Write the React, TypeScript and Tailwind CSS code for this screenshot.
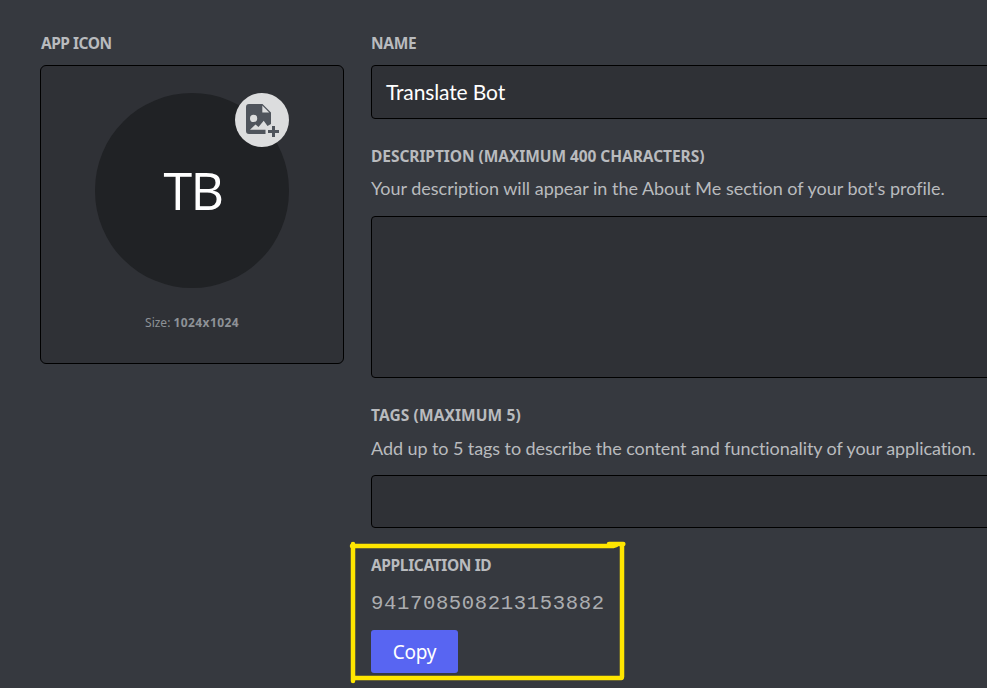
import type { ReactNode } from "react";

function Label({ children, className = "" }: { children: ReactNode; className?: string }) {
  return (
    <h2 className={`h-5 whitespace-nowrap font-['Noto_Sans',sans-serif] text-[15.5px] leading-5 font-bold text-[#b9bbbe] ${className}`}>
      {children}
    </h2>
  );
}

function Hint({ children, className = "" }: { children: ReactNode; className?: string }) {
  return (
    <p className={`h-6 whitespace-nowrap text-[18px] leading-6 text-[#b9bbbe] ${className}`}>{children}</p>
  );
}

function AddImageIcon() {
  return (
    <svg width="54" height="54" viewBox="0 0 54 54" fill="none">
      <path
        d="M14 11H27.5L36 19.5V31L32.5 33L28.7 27.7L23.5 34L20.5 31.5L15 36.7H30.5V41H14Q11 41 11 38V14Q11 11 14 11Z"
        fill="#4f545c"
      />
      <path d="M27.3 12.6V19.5H34.2Z" fill="#dcddde" />
      <circle cx="18.6" cy="25.4" r="3.6" fill="#dcddde" />
      <path d="M37 33H40V37H44V40H40V44H37V40H33V37H37Z" fill="#4f545c" />
    </svg>
  );
}

export default function App() {
  return (
    <main className="relative flex h-[688px] w-[987px] overflow-hidden bg-[#36393f] pt-[33px] pl-10 font-['Lato',sans-serif] [font-variant-ligatures:none]">
      <section className="w-[304px] shrink-0">
        <Label className="pl-px tracking-[-0.5px]">APP ICON</Label>
        <div className="mt-3 flex h-[299px] flex-col items-center rounded-md border border-black bg-[#2f3136] pt-[27px]">
          <div className="relative flex h-[195px] w-[194px] items-center justify-center rounded-full bg-[#202225]">
            <span className="pb-0.5 pl-0.5 font-['Open_Sans',sans-serif] text-[52px] leading-[60px] tracking-[-1.6px] text-white">TB</span>
            <button className="absolute top-0 right-0 size-[54px] rounded-full bg-[#dcddde]">
              <AddImageIcon />
            </button>
          </div>
          <p className="mt-[27px] font-['Noto_Sans',sans-serif] text-[12px] leading-4 whitespace-nowrap text-[#8e9297]">
            Size: <b className="tracking-[0.4px]">1024x1024</b>
          </p>
        </div>
      </section>

      <section className="ml-[27px] w-[640px] shrink-0">
        <Label className="tracking-[-0.3px]">NAME</Label>
        <div className="mt-3 flex h-[54px] items-center rounded border border-black bg-[#2f3136] pl-3.5">
          <span className="text-[21px] leading-7 tracking-[-0.12px] whitespace-nowrap text-white">Translate Bot</span>
        </div>

        <Label className="mt-[27px] tracking-[-0.06px]">DESCRIPTION (MAXIMUM 400 CHARACTERS)</Label>
        <Hint className="mt-2.5 tracking-[-0.01px]">Your description will appear in the About Me section of your bot's profile.</Hint>
        <div className="mt-4 h-[162px] rounded border border-black bg-[#2f3136]" />

        <Label className="mt-[27px] tracking-[0.1px]">TAGS (MAXIMUM 5)</Label>
        <Hint className="mt-[11px] tracking-[-0.08px]">Add up to 5 tags to describe the content and functionality of your application.</Hint>
        <div className="mt-[15px] h-[53px] rounded border border-black bg-[#2f3136]" />

        <Label className="mt-[27px] tracking-[-0.37px]">APPLICATION ID</Label>
        <p className="mt-[17px] font-['Liberation_Mono',monospace] text-[20.6px] leading-6 tracking-[0.62px] text-[#abadb0]">
          941708508213153882
        </p>
        <button className="mt-3.5 flex h-[43px] w-[87px] items-center justify-center rounded-[3px] bg-[#5865f2] pt-px font-['Noto_Sans',sans-serif] text-[19px] leading-6 tracking-[-0.2px] text-white">
          Copy
        </button>
      </section>

      <svg className="absolute top-[536px] left-[346px]" width="286" height="152" fill="none" stroke="#ffe600" strokeLinecap="round" strokeLinejoin="round">
        <path d="M7 8V145" strokeWidth="4.5" />
        <path d="M6 10H267L270 9" strokeWidth="4.5" />
        <path d="M263 8H277.3" strokeWidth="4.5" />
        <path d="M276 9V141" strokeWidth="4.5" />
        <path d="M8 142H275.5" strokeWidth="4.5" />
      </svg>
    </main>
  );
}
